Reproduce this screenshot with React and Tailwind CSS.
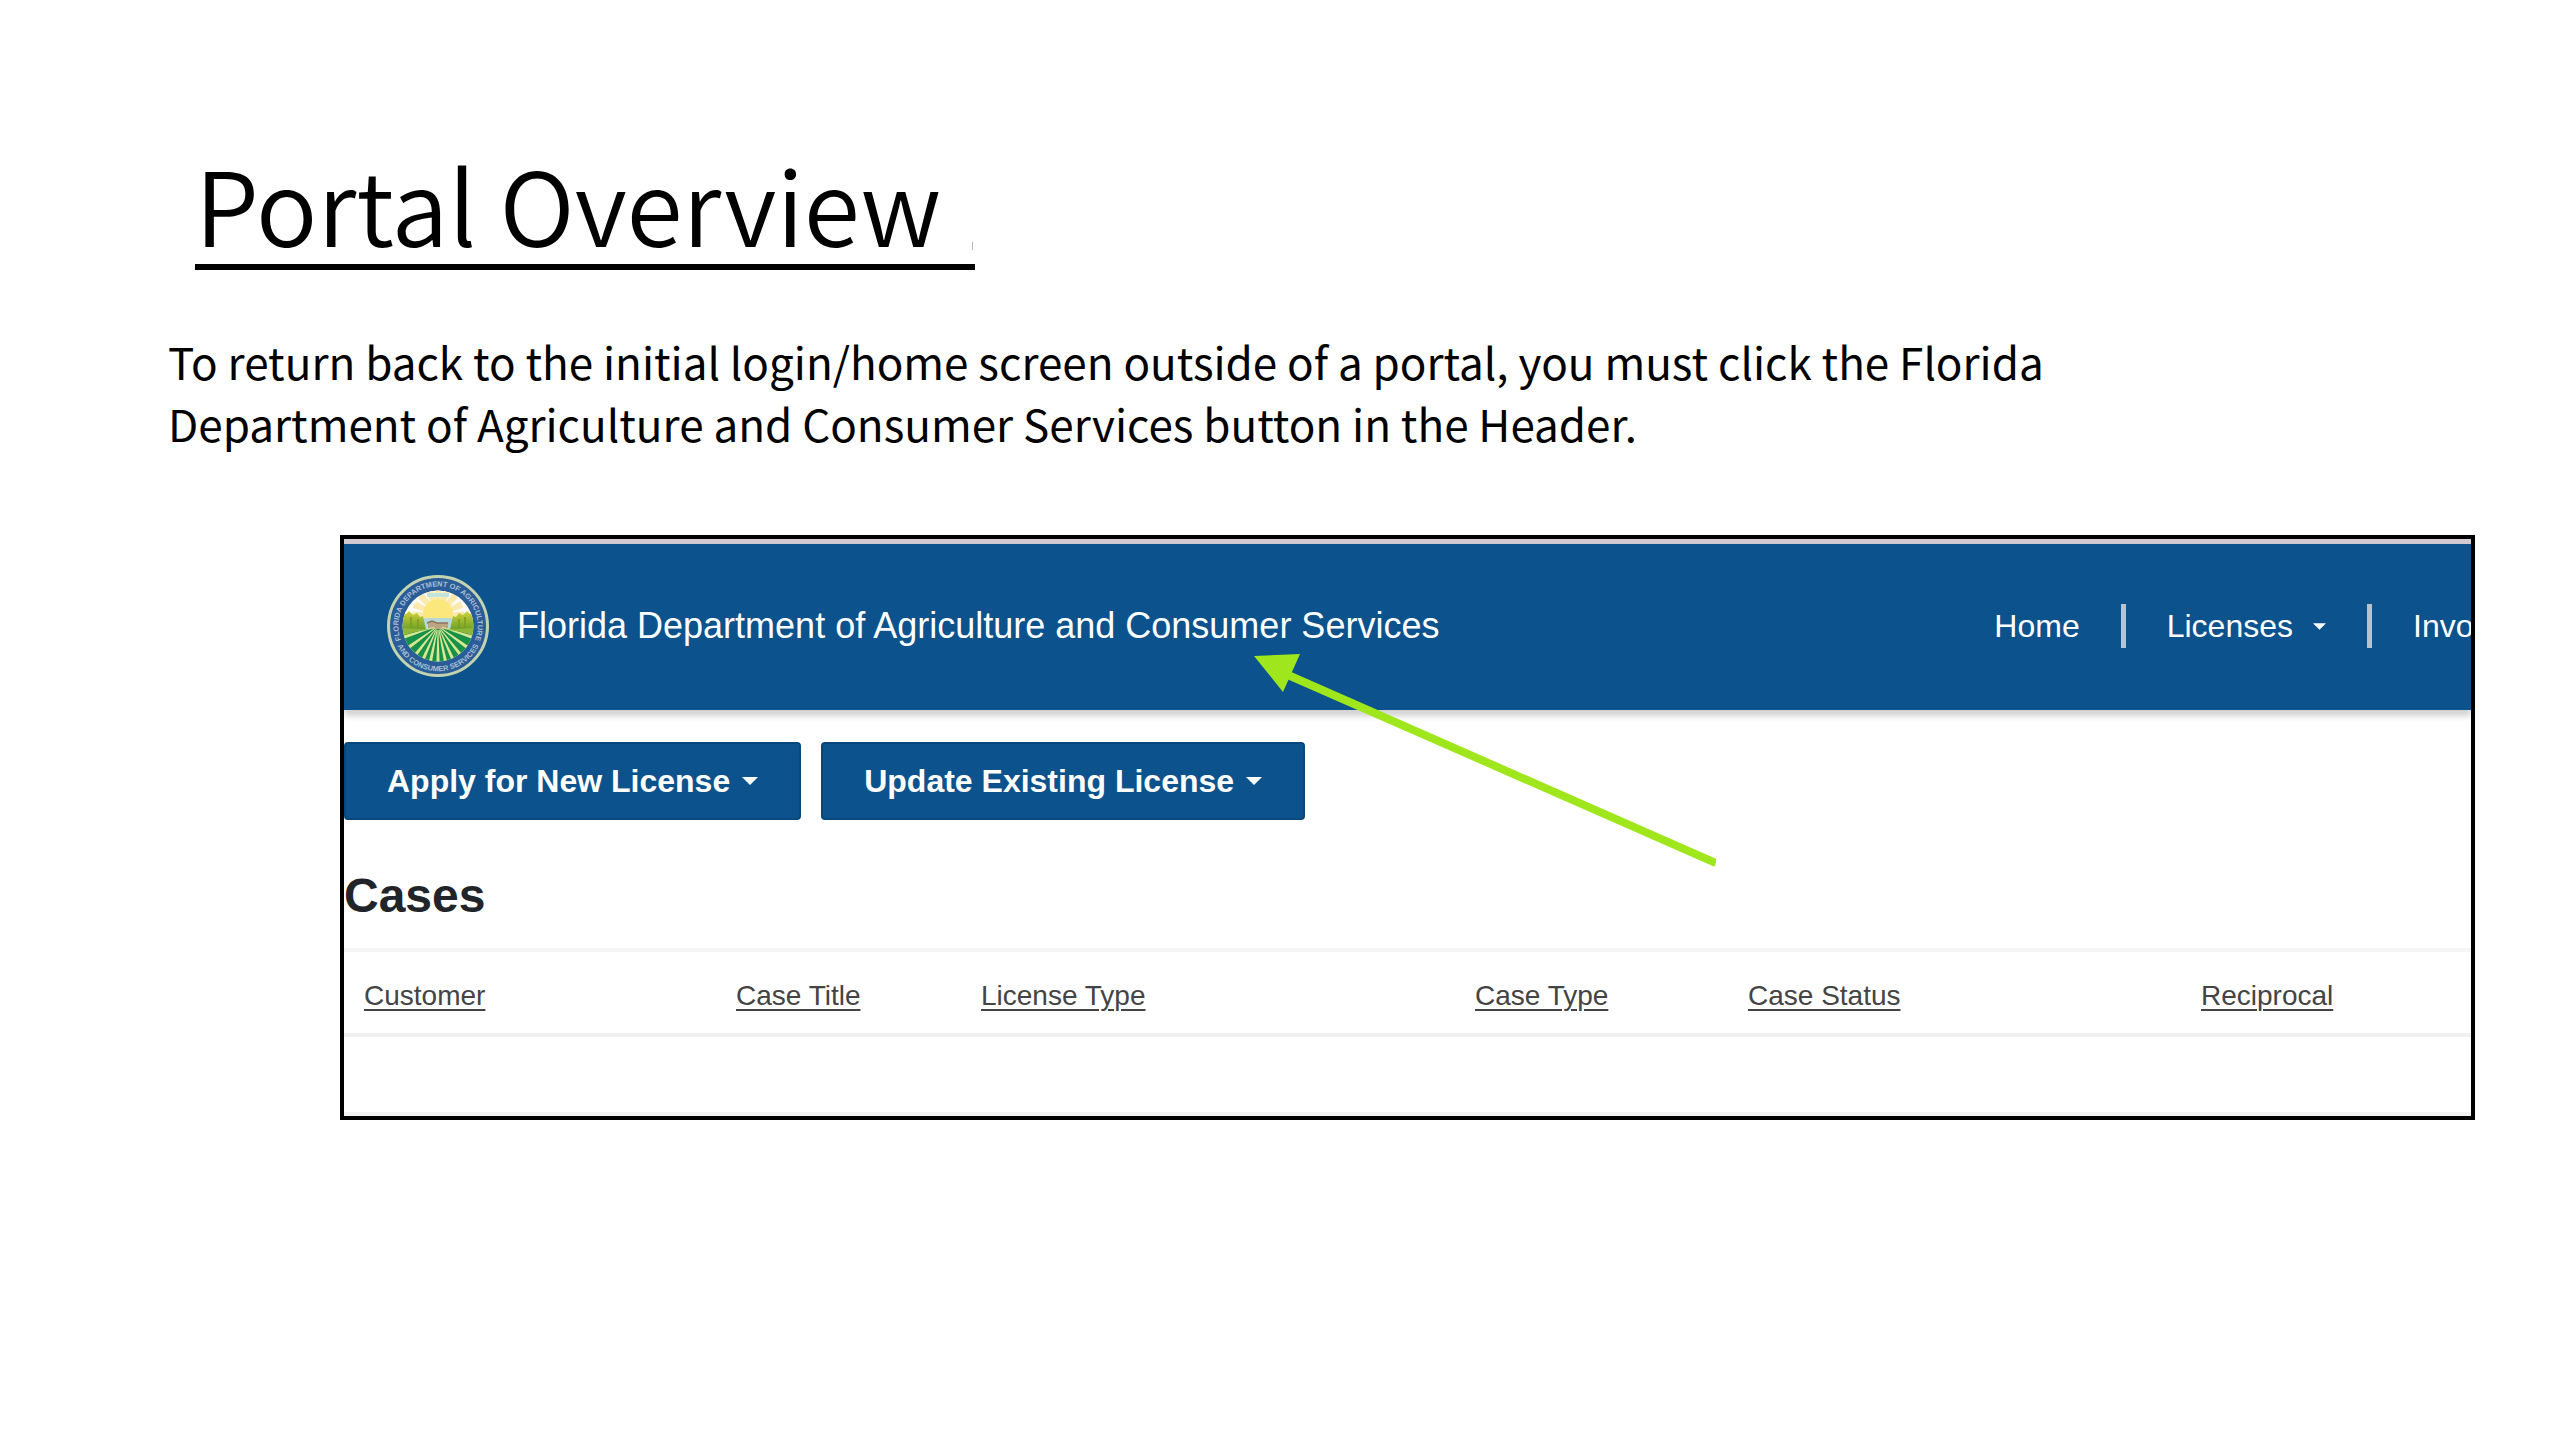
import React from 'react'

const columns = [
	{ label: 'Customer', width: 'w-[372px]' },
	{ label: 'Case Title', width: 'w-[245px]' },
	{ label: 'License Type', width: 'w-[494px]' },
	{ label: 'Case Type', width: 'w-[273px]' },
	{ label: 'Case Status', width: 'w-[453px]' },
	{ label: 'Reciprocal', width: '' },
]

const rays = [-90, -66, -42, -20, 0, 20, 42, 66, 90]
const furrows = [-72, -54, -38, -24, -12, 0, 12, 24, 38, 54, 72]

// small triangle used by the drop-downs
const Caret = ({ className }) => (
	<svg viewBox="0 0 16 8" className={className} aria-hidden="true">
		<path d="M0 0h16L8 8z" fill="currentColor" />
	</svg>
)

const Separator = () => <span className="h-11 w-[5px] shrink-0 bg-[#b9c3cd]" />

// department seal: sun, trees, farm house and field inside a lettered ring
const Seal = () => (
	<svg viewBox="-51 -51 102 102" className="size-[102px] shrink-0" aria-hidden="true">
		<defs>
			<clipPath id="scene"><circle r="35.5" /></clipPath>
			<path id="ringTop" d="M-36.4 15.5A39.6 39.6 0 1 1 36.4 15.5" />
			<path id="ringBottom" d="M-41 19A45.2 45.2 0 0 0 41 19" />
			<linearGradient id="trees" x1="0" y1="0" x2="0" y2="1">
				<stop offset="0" stopColor="#d3d23a" />
				<stop offset="1" stopColor="#6aa026" />
			</linearGradient>
		</defs>
		<circle r="49.5" fill="#2a5d98" stroke="#c3d3b0" strokeWidth="3" />
		<g fill="#a9bfd6" fontFamily="Liberation Sans" fontSize="7.4" fontWeight="700" textAnchor="middle">
			<text><textPath href="#ringTop" startOffset="50%">FLORIDA DEPARTMENT OF AGRICULTURE</textPath></text>
			<text><textPath href="#ringBottom" startOffset="50%">AND CONSUMER SERVICES</textPath></text>
		</g>
		<g clipPath="url(#scene)">
			<rect x="-36" y="-36" width="72" height="72" fill="#fdfcf8" />
			{rays.map(r => (
				<path key={r} d="M-2.4 -12L-3.6 -26H3.6L2.4 -12z" fill="#fbe9ae" transform={`translate(0 -11) rotate(${r})`} />
			))}
			<rect x="-11" y="-33" width="22" height="4" fill="#c3e3dc" />
			<circle cy="-12" r="15" fill="#fce77c" />
			<rect x="-18" y="-8" width="36" height="12" fill="#b5d9d8" />
			<path d="M-36 -14l4 2 3-3 4 4 4-2 3 4 3-1 3 14h-24z" fill="url(#trees)" />
			<path d="M36 -14l-4 2-3-3-4 4-4-2-3 4-3-1-3 14h24z" fill="url(#trees)" />
			<path d="M-27 -9v13M-20 -7v11M27 -9v13M21 -7v11" stroke="#7d9a1f" strokeWidth="1.5" />
			<path d="M-10 3v-6l4-2 5 2h11v6z" fill="#bda584" />
			<path d="M-11 -3l5-2 5 2h11" fill="none" stroke="#8d7361" strokeWidth="1.4" />
			<path d="M-36 8Q-18 3 0 3Q18 3 36 8V36H-36z" fill="#159148" />
			{furrows.map(r => (
				<path key={r} d="M-.4 4L-1.9 44H1.9L.4 4z" fill="#d9e694" transform={`rotate(${r})`} />
			))}
			<path d="M-36 2Q-18 3 -8 3.5Q-24 5 -36 10z" fill="#8fb63a" />
			<path d="M36 2Q18 3 8 3.5Q24 5 36 10z" fill="#8fb63a" />
		</g>
	</svg>
)

const PortalHeader = () => (
	<header className="flex items-center border-t-5 border-[#d3c9d3] bg-[#0c528c] pt-[31px] pb-[33px] pl-[43px] text-white shadow-[0_6px_6px_rgba(0,0,0,0.18)]">
		<a href="#" className="flex items-center gap-7 whitespace-nowrap text-[36px] leading-[44px]">
			<Seal />
			Florida Department of Agriculture and Consumer Services
		</a>
		<nav className="ml-auto flex items-center gap-[41px] text-[32px] leading-[44px]">
			<a href="#">Home</a>
			<Separator />
			<button type="button" className="flex items-center gap-5">
				Licenses
				<Caret className="h-[7px] w-[13px]" />
			</button>
			<Separator />
			<a href="#" className="w-[58px] overflow-hidden">Invoices</a>
		</nav>
	</header>
)

const ActionButton = ({ children }) => (
	<button type="button" className="flex h-[78px] items-center gap-3 rounded-sm border-2 border-[#08477c] bg-[#0c528c] px-[41px] text-[32px] font-bold text-white">
		{children}
		<Caret className="h-2 w-4" />
	</button>
)

export default function App() {
	return (
		<main className="min-h-screen bg-white pt-[152px] pb-20 text-black">
			<h1 className="ml-[195px] inline-flex items-end border-b-6 border-black pr-0.5 pb-[10px] font-['Noto_Sans_CJK_SC',sans-serif] text-[102px] leading-[102px] font-[350]">
				<span className="whitespace-pre">Portal Overview </span>
				<span className="mb-1 ml-2 h-2 w-px bg-[#b5b5b5]" />
			</h1>

			<p className="mt-[60px] ml-[168px] max-w-[1960px] font-['Noto_Sans_CJK_SC',sans-serif] text-[44px] leading-[62px]">
				To return back to the initial login/home screen outside of a portal, you must click the Florida Department of Agriculture and Consumer Services button in the Header.
			</p>

			<section className="relative mt-[81px] mr-[85px] ml-[340px] border-4 border-black font-['Liberation_Sans',sans-serif]">
				<PortalHeader />

				<div className="mt-8 flex gap-5">
					<ActionButton>Apply for New License</ActionButton>
					<ActionButton>Update Existing License</ActionButton>
				</div>

				<h2 className="mt-[52px] text-[48px] leading-[48px] font-bold text-[#212529]">Cases</h2>

				<table className="mt-7 w-full table-fixed border-collapse border-t-4 border-[#f5f5f5] text-left text-[28px] leading-[32px] text-[#444]">
					<thead>
						<tr className="border-b-4 border-[#f1f1f1]">
							{columns.map(c => (
								<th key={c.label} className={`${c.width} pt-7 pb-[21px] pl-5 font-normal`}>
									<a href="#" className="underline decoration-2 underline-offset-4">{c.label}</a>
								</th>
							))}
						</tr>
					</thead>
					<tbody>
						<tr className="border-b-4 border-[#f3f3f3]">
							<td colSpan={6} className="h-[79px]" />
						</tr>
					</tbody>
				</table>

				{/* arrow pointing at the department name */}
				<svg viewBox="0 0 466 214" className="pointer-events-none absolute top-[115px] left-[906px] w-[466px]" aria-hidden="true">
					<path d="M38 21L466 209" stroke="#9fe71c" strokeWidth="8" />
					<path d="M4 2L50 0L33 38z" fill="#9fe71c" />
				</svg>
			</section>
		</main>
	)
}
